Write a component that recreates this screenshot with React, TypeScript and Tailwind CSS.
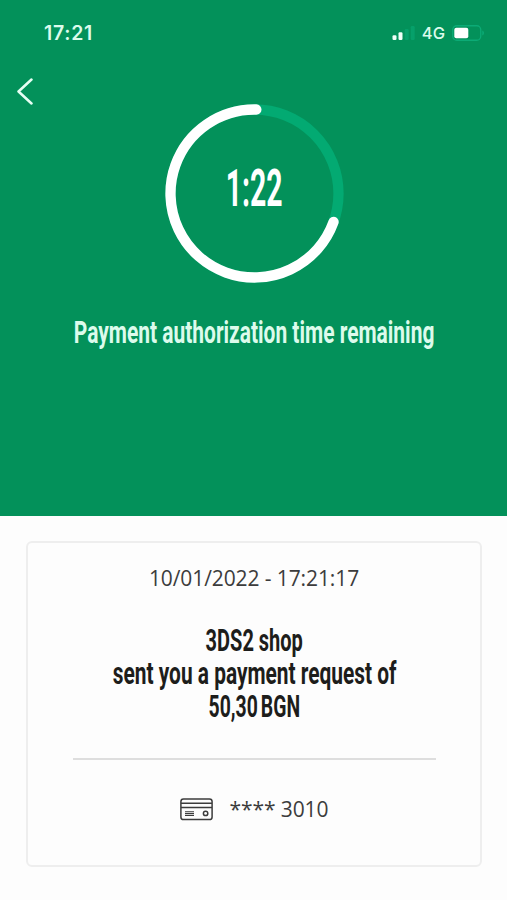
import { clsx } from "clsx";

const RADIUS = 84;
const CIRCUMFERENCE = 2 * Math.PI * RADIUS;

const request = {
  date: "10/01/2022 - 17:21:17",
  card: "**** 3010",
};

const requestLines = [
  { text: "3DS2 shop", className: "scale-x-[0.635] pl-0.5" },
  { text: "sent you a payment request of", className: "scale-x-[0.663] pl-0.5" },
  {
    text: "50,30 BGN",
    className: "scale-x-[0.615] [word-spacing:-3px]",
  },
];

// Narrow headline type, squeezed horizontally around its centre
function Condensed({
  text,
  className,
}: {
  text: string;
  className?: string;
}) {
  return (
    <span
      className={clsx(
        "block whitespace-nowrap font-['Roboto',sans-serif] font-bold",
        className
      )}
    >
      {text}
    </span>
  );
}

function StatusBar() {
  return (
    <div className="flex h-[67px] items-center justify-between pl-[44px] pr-[22px] font-['Inter',sans-serif] text-[#dcfbec]">
      <span className="text-[19.5px] font-semibold leading-none tracking-[0.7px]">
        17:21
      </span>
      <div className="flex items-center">
        <svg width="23" height="15" viewBox="0 0 23 15" fill="#f0fff8">
          <rect x="0.5" y="9.2" width="4" height="4.8" rx="1.2" />
          <rect x="6.5" y="6.2" width="4" height="7.8" rx="1.2" />
          <rect x="12.7" y="3" width="4" height="11" rx="1.2" fill="#06a06a" />
          <rect x="18.7" y="0" width="4" height="14" rx="1.2" fill="#06a06a" />
        </svg>
        <span className="ml-[7px] text-[16.5px] font-medium leading-none">
          4G
        </span>
        <svg
          className="mb-0.5 ml-[7px]"
          width="33"
          height="16"
          viewBox="0 0 33 16"
        >
          <rect
            x="0.75"
            y="0.75"
            width="28"
            height="14.5"
            rx="4"
            fill="none"
            stroke="#0cab76"
            strokeWidth="1.3"
          />
          <rect x="2.3" y="2.7" width="14" height="10.6" rx="2" fill="#fff" />
          <path d="M30.3 5.5c2.2 0.9 2.2 4.1 0 5z" fill="#0cab76" />
        </svg>
      </div>
    </div>
  );
}

function Countdown() {
  return (
    <div className="grid h-[180px] w-[180px] place-items-center">
      <svg
        className="col-start-1 row-start-1"
        width="180"
        height="180"
        viewBox="0 0 180 180"
        fill="none"
        strokeWidth="10.3"
      >
        <circle cx="89.5" cy="89.5" r={RADIUS} stroke="#03aa72" />
        <circle
          cx="89.5"
          cy="89.5"
          r={RADIUS}
          stroke="#fff"
          strokeLinecap="round"
          strokeDasharray={`${(CIRCUMFERENCE * 251) / 360} ${CIRCUMFERENCE}`}
          transform="rotate(19.8 89.5 89.5)"
        />
      </svg>
      <Condensed
        text="1:22"
        className="col-start-1 row-start-1 mb-2.5 scale-x-[0.545] text-[52px] leading-none text-white"
      />
    </div>
  );
}

function CardIcon() {
  return (
    <svg
      width="33"
      height="23"
      viewBox="0 0 33 23"
      fill="none"
      stroke="#3c3c3c"
      strokeWidth="1.5"
    >
      <rect x="0.9" y="0.9" width="31.2" height="20.6" rx="2.6" />
      <path d="M1 5.2h31M1 9.6h31" />
      <path d="M5 13.7h9M5 15.6h9M5 17.5h9" strokeWidth="1.1" />
      <circle cx="25.6" cy="15.4" r="2.2" />
    </svg>
  );
}

export default function App() {
  return (
    <main className="flex h-[900px] w-[507px] flex-col overflow-hidden bg-[#fdfdfd]">
      {/* Timer */}
      <section className="flex h-[516px] shrink-0 flex-col bg-[#03915a]">
        <StatusBar />
        <button className="ml-4 mt-2.5 h-[28px] w-[18px]" aria-label="Back">
          <svg width="18" height="28" viewBox="0 0 18 28" fill="none">
            <path
              d="M15.5 2.5L2.5 14.5L15.5 26.5"
              stroke="#e6fff4"
              strokeWidth="2.5"
              strokeLinecap="round"
              strokeLinejoin="round"
            />
          </svg>
        </button>
        <div className="-mt-px flex flex-col items-center pl-0.5">
          <Countdown />
          <Condensed
            text="Payment authorization time remaining"
            className="mt-[29px] scale-x-[0.665] text-[31.5px] leading-10 text-[#dcfbec]"
          />
        </div>
      </section>

      {/* Request details */}
      <section className="ml-[26px] mr-[25px] mt-[25px] flex h-[326px] flex-col items-center rounded-md border-2 border-[#eeeeee] pt-[21px] font-['Open_Sans',sans-serif] text-[21px] text-[#3c3c3c]">
        <p className="leading-7 tracking-[-0.1px]">{request.date}</p>
        <div className="mt-8 flex flex-col items-center text-[31.5px] leading-[33px] text-[#1d1d1b]">
          {requestLines.map((line) => (
            <Condensed key={line.text} {...line} />
          ))}
        </div>
        <hr className="mt-[35px] w-[363px] border-t-2 border-[#dedede]" />
        <div className="mt-[35px] flex items-center gap-[17px]">
          <CardIcon />
          <span className="leading-7 tracking-[-0.1px]">{request.card}</span>
        </div>
      </section>
    </main>
  );
}
